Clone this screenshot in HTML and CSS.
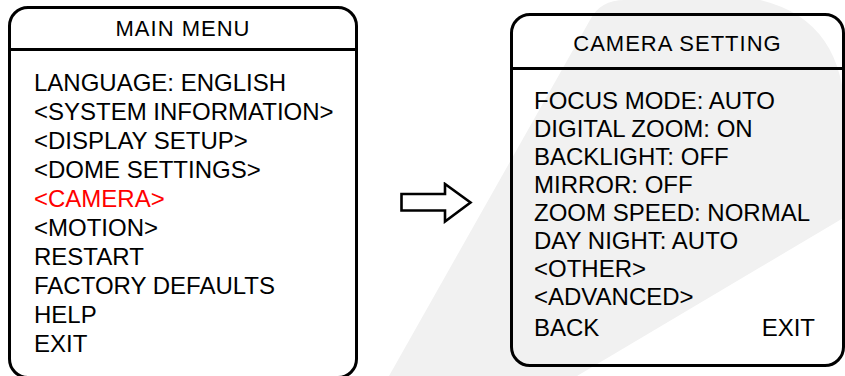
FILE: index.html
```html
<html>
  <head>
    <title>Camera menu</title>
    <link rel="stylesheet" href="styles.css">
  </head>
  <body>
    <svg class="marca" width="845" height="376" viewBox="0 0 845 376">
      <path d="M389 376 L590 20 Q600 0 625 0 L760 0 Q845 20 845 120 L845 217 L577 376 Z" fill="#f1f1f1"/>
    </svg>

    <div class="menu menuPrincipal">
      <div class="cabecera">MAIN MENU</div>
      <ul class="lista">
        <li>LANGUAGE: ENGLISH</li>
        <li>&lt;SYSTEM INFORMATION&gt;</li>
        <li>&lt;DISPLAY SETUP&gt;</li>
        <li>&lt;DOME SETTINGS&gt;</li>
        <li class="activo">&lt;CAMERA&gt;</li>
        <li>&lt;MOTION&gt;</li>
        <li>RESTART</li>
        <li>FACTORY DEFAULTS</li>
        <li>HELP</li>
        <li>EXIT</li>
      </ul>
    </div>

    <div class="flecha">
      <svg width="73" height="42" viewBox="0 0 73 42">
        <path d="M1.5 12 H45 V2 L70.5 20.5 L45 39.5 V28.5 H1.5 Z" fill="#fff" stroke="#000" stroke-width="2.6" stroke-linejoin="miter"/>
      </svg>
    </div>

    <div class="menu menuCamara">
      <div class="cabecera">CAMERA SETTING</div>
      <ul class="lista">
        <li>FOCUS MODE: AUTO</li>
        <li>DIGITAL ZOOM: ON</li>
        <li>BACKLIGHT: OFF</li>
        <li>MIRROR: OFF</li>
        <li>ZOOM SPEED: NORMAL</li>
        <li>DAY NIGHT: AUTO</li>
        <li>&lt;OTHER&gt;</li>
        <li>&lt;ADVANCED&gt;</li>
        <li class="filaFinal"><span>BACK</span><span>EXIT</span></li>
      </ul>
    </div>
  </body>
</html>
```

FILE: styles.css
```css
body{
  margin:0;
  overflow:hidden;
  background-color:#fff;
  font-family:"Liberation Sans", Arial, sans-serif;
  color:#000;
  display:flex;
  align-items:flex-start;
  position:relative;
  height:376px;
}

.marca{
  position:absolute;
  top:0;
  left:0;
  z-index:-1;
}

.menu{
  box-sizing:border-box;
  border:3px solid #000;
  border-radius:20px;
}
.menuPrincipal{
  margin:6px 0 0 8px;
  width:350px;
  height:373px;
}
.menuCamara{
  margin:13px 0 0 37px;
  width:335px;
  height:354px;
}

.cabecera{
  border-bottom:3px solid #000;
  display:flex;
  justify-content:center;
  align-items:center;
  font-size:22px;
  letter-spacing:1px;
}
.menuPrincipal .cabecera{ height:42px; padding-top:1px; box-sizing:border-box; }
.menuCamara .cabecera{ height:54px; padding-top:4px; box-sizing:border-box; }

.lista{
  list-style-type:none;
  margin:0;
  font-size:24px;
}
.menuPrincipal .lista{
  padding:17px 0 0 23px;
  line-height:29px;
}
.menuCamara .lista{
  padding:17px 27px 0 21px;
  line-height:28px;
}
.activo{ color:#ff0000; }
.filaFinal{
  display:flex;
  justify-content:space-between;
  margin-top:3px;
}

.flecha{
  margin:182px 0 0 42px;
  line-height:0;
}
```
